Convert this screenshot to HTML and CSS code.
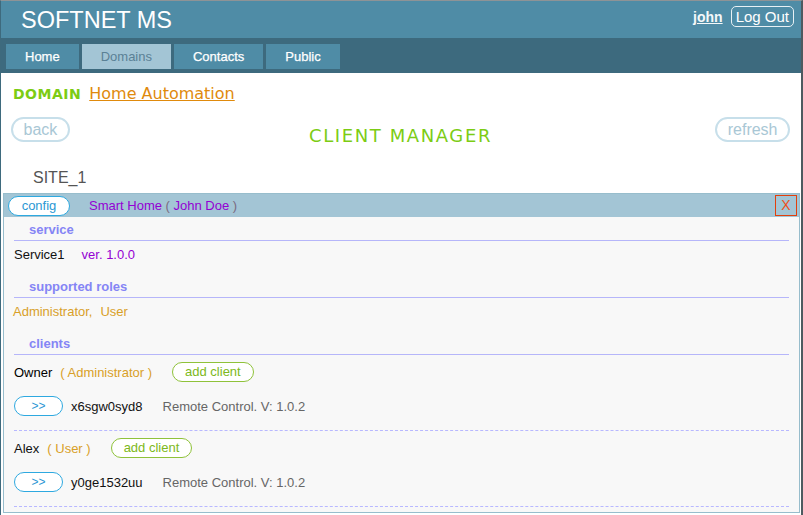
FILE: index.html
```html
<!DOCTYPE html>
<html>
<head>
<meta charset="utf-8">
<title>SOFTNET MS</title>
<link rel="stylesheet" href="styles.css">
</head>
<body>
<div class="page">
  <header class="top">
    <div class="brand">SOFTNET MS</div>
    <div class="user">
      <a class="user-name" href="#">john</a>
      <button class="logout">Log Out</button>
    </div>
  </header>
  <nav class="nav">
    <a class="tab" href="#">Home</a>
    <a class="tab active" href="#">Domains</a>
    <a class="tab" href="#">Contacts</a>
    <a class="tab" href="#">Public</a>
  </nav>
  <main class="content">
    <div class="domain-row">
      <span class="domain-label">DOMAIN</span>
      <a class="domain-name" href="#">Home Automation</a>
    </div>
    <div class="toolbar">
      <button class="pill pill-left">back</button>
      <h1 class="title">CLIENT MANAGER</h1>
      <button class="pill pill-right">refresh</button>
    </div>
    <div class="site">SITE_1</div>
    <section class="panel">
      <div class="panel-head">
        <button class="btn-blue btn-config">config</button>
        <span class="app-name">Smart Home <span class="paren">(</span> John Doe <span class="paren">)</span></span>
        <button class="btn-close">X</button>
      </div>
      <div class="panel-body">
        <div class="sec-title">service</div>
        <div class="item"><span class="dark">Service1</span><span class="ver">ver. 1.0.0</span></div>
        <div class="sec-title">supported roles</div>
        <div class="item roles"><span>Administrator,</span><span class="role2">User</span></div>
        <div class="sec-title">clients</div>
        <div class="client">
          <div class="crow">
            <span class="cname">Owner</span>
            <span class="crole">( Administrator )</span>
            <button class="btn-green">add client</button>
          </div>
          <div class="crow crow2">
            <button class="btn-blue btn-go">&gt;&gt;</button>
            <span class="cid">x6sgw0syd8</span>
            <span class="capp">Remote Control. V: 1.0.2</span>
          </div>
        </div>
        <div class="client">
          <div class="crow">
            <span class="cname alex">Alex</span>
            <span class="crole">( User )</span>
            <button class="btn-green">add client</button>
          </div>
          <div class="crow crow2">
            <button class="btn-blue btn-go">&gt;&gt;</button>
            <span class="cid">y0ge1532uu</span>
            <span class="capp">Remote Control. V: 1.0.2</span>
          </div>
        </div>
      </div>
    </section>
  </main>
</div>
</body>
</html>
```

FILE: styles.css
```css
* { box-sizing: border-box; }
html, body { margin: 0; padding: 0; background: #fff; }
body { font-family: "Liberation Sans", Arial, sans-serif; overflow: hidden; }
button { font-family: "Liberation Sans", Arial, sans-serif; cursor: pointer; }

.page {
  width: 803px;
  height: 515px;
  border-left: 1px solid #3e6a7d;
  border-right: 2px solid #4d5a60;
  border-top: 1px solid #8e9396;
  overflow: hidden;
}

.top {
  height: 37px;
  background: #4f8ca6;
  display: flex;
  justify-content: space-between;
  align-items: center;
}
.brand {
  color: #fff;
  font-size: 23.5px;
  padding-left: 20px;
  line-height: 26px;
}
.user {
  align-self: flex-start;
  margin-top: 5px;
  margin-right: 7px;
  display: flex;
  align-items: center;
}
.user-name {
  color: #f4f8fa;
  font-weight: bold;
  font-size: 14px;
  text-decoration: underline;
  margin-right: 8px;
}
.logout {
  height: 21px;
  background: transparent;
  border: 1px solid #e8f0f4;
  border-radius: 5px;
  color: #fff;
  font-size: 15px;
  padding: 0 4px;
  line-height: 19px;
}

.nav {
  height: 35px;
  background: #3d6a7e;
  display: flex;
  gap: 3px;
  padding: 6px 0 4px 5px;
}
.tab {
  height: 25px;
  line-height: 25px;
  background: #4f8ca6;
  color: #fff;
  font-size: 13px;
  text-decoration: none;
  padding: 0 19px;
  text-align: center;
  -webkit-text-stroke: 0.25px #fff;
}
.tab.active { background: #a3c5d5; color: #5a8195; -webkit-text-stroke: 0; }

.domain-row {
  margin-top: 11px;
  padding-left: 12px;
  height: 20px;
  line-height: 20px;
  display: flex;
  align-items: baseline;
  gap: 8px;
  font-family: "DejaVu Sans", Verdana, sans-serif;
}
.domain-label {
  color: #7ccc14;
  font-weight: bold;
  font-size: 14px;
  letter-spacing: 0.5px;
}
.domain-name {
  color: #e08a0c;
  font-size: 16px;
  text-decoration: underline;
}

.toolbar {
  margin-top: 13px;
  padding: 0 11px 0 10px;
  display: grid;
  grid-template-columns: 1fr auto 1fr;
  align-items: start;
}
.pill {
  height: 25px;
  background: #fff;
  border: 2px solid #c7dfea;
  border-radius: 13px;
  color: #a9c7d5;
  font-size: 16px;
  padding: 0 10.5px;
  line-height: 20px;
}
.pill-left { justify-self: start; }
.pill-right { justify-self: end; }
.title {
  margin: 8px 0 0;
  font-family: "DejaVu Sans", Verdana, sans-serif;
  font-weight: normal;
  font-size: 18px;
  line-height: 22px;
  letter-spacing: 1.6px;
  color: #7ccc14;
}

.site {
  margin-top: 22px;
  padding-left: 32px;
  font-size: 16px;
  line-height: 18px;
  color: #555;
}

.panel {
  margin: 6px 1px 0 2px;
  border: 1px solid #97bdcc;
  background: #f8f8f8;
}
.panel-head {
  height: 23px;
  background: #a3c5d5;
  display: flex;
  align-items: center;
  padding: 0 2px 0 4px;
}
.btn-blue {
  height: 20px;
  background: #fff;
  border: 1px solid #2ea9e0;
  border-radius: 10px;
  color: #2b98d4;
  font-size: 13px;
  line-height: 18px;
  padding: 0;
}
.btn-config { width: 62px; }
.btn-go { width: 49px; font-size: 12px; }
.app-name {
  margin-left: 19px;
  color: #9400d3;
  font-size: 13px;
}
.paren { color: #7a6a80; }
.btn-close {
  margin-left: auto;
  width: 22px;
  height: 21px;
  background: transparent;
  border: 1px solid #e2400c;
  color: #f0501a;
  font-size: 14px;
  padding: 0;
  line-height: 19px;
}

.panel-body {
  padding: 4px 10px 5px 10px;
  font-size: 13px;
}
.sec-title {
  font-weight: bold;
  color: #8585f5;
  line-height: 18px;
  padding: 0 0 1px 15px;
  border-bottom: 1px solid #b6b6fa;
}
.item {
  margin: 6px 0 15px;
  line-height: 16px;
  display: flex;
}
.dark { color: #111; }
.ver { margin-left: 17px; color: #9400d3; }
.roles { color: #d8a028; margin-left: -1px; }
.role2 { margin-left: 8px; }

.client {
  padding: 7px 0 14px;
  border-bottom: 1px dashed #b8b8ff;
}
.crow {
  height: 20px;
  display: flex;
  align-items: center;
}
.crow2 { margin-top: 14px; }
.cname { color: #000; }
.crole { color: #d8a028; margin-left: 8px; }
.alex { color: #111; }
.btn-green {
  margin-left: 20px;
  height: 20px;
  background: #fff;
  border: 1px solid #8fc23a;
  border-radius: 10px;
  color: #7db820;
  font-size: 13px;
  padding: 0 12px;
  line-height: 18px;
}
.cid { margin-left: 8px; color: #111; }
.capp { margin-left: 20px; color: #666; }
```
